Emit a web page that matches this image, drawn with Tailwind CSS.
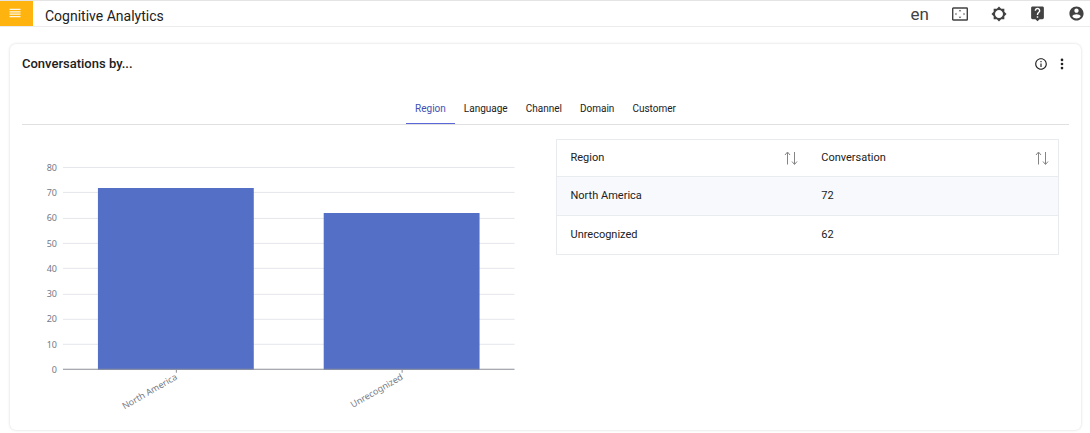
<!DOCTYPE html>
<html lang="en">
<head>
<meta charset="utf-8">
<meta name="viewport" content="width=device-width, initial-scale=1">
<title>Cognitive Analytics</title>
<script src="https://cdn.jsdelivr.net/npm/@tailwindcss/browser@4"></script>
</head>
<body class="min-h-screen bg-white font-[Roboto,sans-serif] text-[#212121]">
<header class="flex h-[27px] items-center border-y border-[#ececec] border-t-[#e4e4e4]">
  <button aria-label="Menu" class="flex h-[25px] w-[33px] shrink-0 items-center justify-center bg-[#ffb30f] pr-1 pb-0.5 text-white">
    <svg class="h-3 w-3" viewBox="0 0 12 12" fill="none" stroke="currentColor" stroke-width="1.3"><path d="M.5 2.4h11M.5 4.8h11M.5 7.2h11M.5 9.6h11" stroke-opacity=".9"/></svg>
  </button>
  <h1 class="pt-1 pl-3 text-[14px] leading-5">Cognitive Analytics</h1>
  <div class="ml-auto flex items-center gap-[22px] pr-[5px] text-[#424242]">
    <button class="text-[17px] leading-5">en</button>
    <button aria-label="Full screen"><svg class="h-[18px] w-[18px]" viewBox="0 0 18 18"><rect x="1.7" y="3" width="14.6" height="12" rx=".6" fill="none" stroke="currentColor" stroke-width="1.4"/><path fill="currentColor" d="M9 4.8l1.3 1.4H7.700zM9 13.200l1.300-1.400H7.700zM4 9l1.400-1.200v2.400zM14 9l-1.400-1.200v2.400z"/></svg></button>
    <button aria-label="Theme"><svg class="h-4 w-4" viewBox="0 0 24 24" fill="currentColor"><path d="M20 8.69V4h-4.69L12 .69 8.69 4H4v4.69L.69 12 4 15.31V20h4.69L12 23.31 15.31 20H20v-4.69L23.31 12 20 8.69zM12 18c-3.31 0-6-2.69-6-6s2.69-6 6-6 6 2.69 6 6-2.69 6-6 6z"/></svg></button>
    <button aria-label="Help"><svg class="h-[17px] w-[17px]" viewBox="0 0 24 24" fill="currentColor"><path d="M19 2H5c-1.11 0-2 .9-2 2v14c0 1.1.89 2 2 2h4l3 3 3-3h4c1.1 0 2-.9 2-2V4c0-1.1-.9-2-2-2zm-6 16h-2v-2h2v2zm2.07-7.75l-.9.92C13.45 11.9 13 12.5 13 14h-2v-.5c0-1.1.45-2.1 1.17-2.83l1.24-1.26c.37-.36.59-.86.59-1.41 0-1.1-.9-2-2-2s-2 .9-2 2H8c0-2.21 1.79-4 4-4s4 1.79 4 4c0 .88-.36 1.68-.93 2.25z"/></svg></button>
    <button aria-label="Account"><svg class="h-[17px] w-[17px]" viewBox="0 0 24 24" fill="currentColor"><path d="M12 2C6.48 2 2 6.48 2 12s4.48 10 10 10 10-4.48 10-10S17.52 2 12 2zm0 3c1.66 0 3 1.34 3 3s-1.34 3-3 3-3-1.34-3-3 1.34-3 3-3zm0 14.200c-2.500 0-4.710-1.280-6-3.220.030-1.990 4-3.080 6-3.080 1.990 0 5.970 1.090 6 3.080-1.290 1.940-3.500 3.220-6 3.220z"/></svg></button>
  </div>
</header>
<main class="pt-[17px] pr-[9px] pl-[10px]">
  <section class="rounded-md px-3 pt-2 pb-1 shadow-[0_0_3px_rgba(0,0,0,0.16)]">
    <div class="flex h-6 items-center">
      <h2 class="text-[13px] leading-5 font-medium">Conversations by...</h2>
      <div class="ml-auto flex items-center gap-[7px] text-[#212121]">
        <button aria-label="Information"><svg class="h-[14px] w-[14px]" viewBox="0 0 24 24" fill="currentColor"><path d="M11 7h2v2h-2zm0 4h2v6h-2zm1-9C6.480 2 2 6.480 2 12s4.480 10 10 10 10-4.480 10-10S17.520 2 12 2zm0 18c-4.410 0-8-3.590-8-8s3.590-8 8-8 8 3.590 8 8-3.590 8-8 8z"/></svg></button>
        <button aria-label="More options"><svg class="h-[14px] w-[14px]" viewBox="0 0 24 24" fill="currentColor"><circle cx="12" cy="5" r="2.300"/><circle cx="12" cy="12" r="2.300"/><circle cx="12" cy="19" r="2.300"/></svg></button>
      </div>
    </div>
    <div role="tablist" class="mt-[15px] flex justify-center border-b border-[#e0e0e0] text-[10px] leading-4">
      <button role="tab" aria-selected="true" class="border-b border-[#5a67d8] px-[9px] pt-[10px] pb-[6px] text-[#3f51b5]">Region</button>
      <button role="tab" aria-selected="false" class="border-b border-transparent px-[9px] pt-[10px] pb-[6px]">Language</button>
      <button role="tab" aria-selected="false" class="border-b border-transparent px-[9px] pt-[10px] pb-[6px]">Channel</button>
      <button role="tab" aria-selected="false" class="border-b border-transparent px-[9px] pt-[10px] pb-[6px]">Domain</button>
      <button role="tab" aria-selected="false" class="border-b border-transparent px-[9px] pt-[10px] pb-[6px]">Customer</button>
    </div>
    <div class="grid grid-cols-2 items-start">
      <svg class="w-full font-['Noto_Sans',sans-serif] text-[9px]" viewBox="0 0 524 301" role="img" aria-label="Conversations by region">
        <path d="M41 42.500h452M41 67.500h452M41 93.500h452M41 118.500h452M41 143.500h452M41 169.500h452M41 194.500h452M41 219.500h452" stroke="#e4e6ec"/>
        <path d="M76 63h156v182H76zM302 88h156v157H302z" fill="#5470c6"/>
        <path d="M41 244.500h452M154.500 245v3M380.500 245v3" stroke="#8b8e98" fill="none"/>
        <g fill="#747985" text-anchor="end">
          <text x="35" y="46">80</text>
          <text x="35" y="71">70</text>
          <text x="35" y="96">60</text>
          <text x="35" y="122">50</text>
          <text x="35" y="147">40</text>
          <text x="35" y="172">30</text>
          <text x="35" y="197">20</text>
          <text x="35" y="223">10</text>
          <text x="35" y="248">0</text>
          <text transform="translate(156 254) rotate(-30)">North America</text>
          <text transform="translate(382 254) rotate(-30)">Unrecognized</text>
        </g>
      </svg>
      <div class="px-[10px] pt-[14px]">
        <table class="w-full table-fixed border-collapse border border-[#e9ecef] text-left text-[11px] leading-4">
          <thead>
            <tr class="h-[37px] border-b border-[#e9ecef]">
              <th scope="col" class="px-[14px] font-normal"><div class="flex items-center justify-between">Region
                <button aria-label="Sort by region" class="-mr-1.5 text-[#858585]"><svg class="h-4 w-4" viewBox="0 0 16 16" fill="none" stroke="currentColor"><path d="M4.500 14.500v-12M2 5l2.500-3L7 5M11.500 2v12M9 11.500l2.500 3 2.500-3"/></svg></button></div></th>
              <th scope="col" class="px-[14px] font-normal"><div class="flex items-center justify-between">Conversation
                <button aria-label="Sort by conversation" class="-mr-1.5 text-[#858585]"><svg class="h-4 w-4" viewBox="0 0 16 16" fill="none" stroke="currentColor"><path d="M4.500 14.500v-12M2 5l2.500-3L7 5M11.500 2v12M9 11.500l2.500 3 2.500-3"/></svg></button></div></th>
            </tr>
          </thead>
          <tbody>
            <tr class="h-[39px] border-b border-[#e9ecef] bg-[#f8f9fc]"><td class="px-[14px]">North America</td><td class="px-[14px]">72</td></tr>
            <tr class="h-[39px]"><td class="px-[14px]">Unrecognized</td><td class="px-[14px]">62</td></tr>
          </tbody>
        </table>
      </div>
    </div>
  </section>
</main>
</body>
</html>
